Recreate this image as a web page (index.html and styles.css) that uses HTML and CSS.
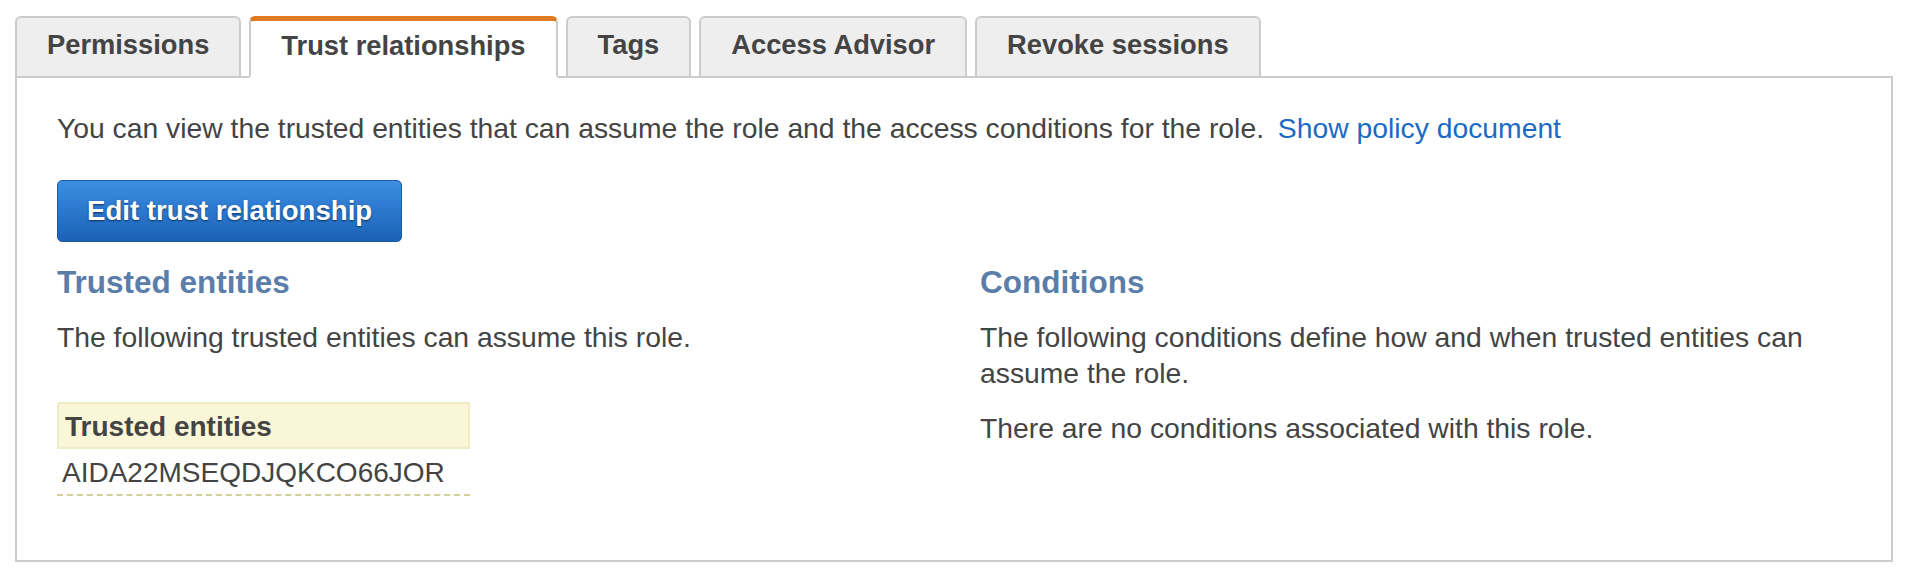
FILE: index.html
```html
<!DOCTYPE html>
<html lang="en">
<head>
<meta charset="utf-8">
<title>Trust relationships</title>
<link rel="stylesheet" href="styles.css">
</head>
<body>
<div class="page">
  <ul class="tabs">
    <li class="tab">Permissions</li>
    <li class="tab active">Trust relationships</li>
    <li class="tab">Tags</li>
    <li class="tab">Access Advisor</li>
    <li class="tab">Revoke sessions</li>
  </ul>
  <div class="panel">
    <p class="intro">You can view the trusted entities that can assume the role and the access conditions for the role. <a class="link" href="#">Show policy document</a></p>
    <div class="actions">
      <button class="btn" type="button">Edit trust relationship</button>
    </div>
    <div class="cols">
      <section class="col">
        <h3 class="heading">Trusted entities</h3>
        <p class="text">The following trusted entities can assume this role.</p>
        <table class="entities">
          <thead>
            <tr><th>Trusted entities</th></tr>
          </thead>
          <tbody>
            <tr><td>AIDA22MSEQDJQKCO66JOR</td></tr>
          </tbody>
        </table>
      </section>
      <section class="col">
        <h3 class="heading">Conditions</h3>
        <p class="text">The following conditions define how and when trusted entities can assume the role.</p>
        <p class="text">There are no conditions associated with this role.</p>
      </section>
    </div>
  </div>
</div>
</body>
</html>
```

FILE: styles.css
```css
* {
  box-sizing: border-box;
}

html, body {
  margin: 0;
  padding: 0;
  background: #ffffff;
}

body {
  font-family: "Liberation Sans", Arial, Helvetica, sans-serif;
  color: #444444;
}

.page {
  padding: 16px 17px 0 15px;
}

.tabs {
  list-style: none;
  margin: 0 0 -2px 0;
  padding: 0;
  display: flex;
  gap: 8px;
}

.tab {
  position: relative;
  z-index: 1;
  height: 62px;
  padding: 0 30px 4px;
  border: 2px solid #cccccc;
  border-radius: 6px 6px 0 0;
  background: #eeeeee;
  font-size: 27.3px;
  font-weight: bold;
  line-height: 54px;
  color: #444444;
  white-space: nowrap;
}

.tab.active {
  background: #ffffff;
  border-top: 5px solid #e17b23;
  border-bottom-color: #ffffff;
  line-height: 49px;
  padding-bottom: 6px;
}

.panel {
  height: 486px;
  border: 2px solid #cccccc;
  padding: 30px 40px 0 40px;
}

.intro {
  margin: 0;
  font-size: 28.3px;
  line-height: 40px;
}

.link {
  margin-left: 6px;
  color: #1b6ac3;
  text-decoration: none;
}

.actions {
  margin-top: 32px;
}

.btn {
  height: 62px;
  padding: 0 29px;
  border: 1px solid #1a5ba6;
  border-radius: 5px;
  background: linear-gradient(to bottom, #3c8fe1 0%, #2b78cf 50%, #1c62b4 100%);
  color: #ffffff;
  font-family: "Liberation Sans", Arial, Helvetica, sans-serif;
  font-size: 27.6px;
  font-weight: bold;
  text-shadow: 0 1px 2px rgba(0, 0, 0, 0.6);
  cursor: pointer;
}

.cols {
  margin-top: 20px;
  display: grid;
  grid-template-columns: 1fr 1fr;
  column-gap: 52px;
}

.heading {
  margin: 0 0 17px;
  font-size: 31.5px;
  font-weight: bold;
  line-height: 40px;
  color: #5a7ea9;
}

.text {
  margin: 0 0 19px;
  font-size: 28.3px;
  line-height: 36px;
}

.entities {
  margin-top: 47px;
  width: 413px;
  border-collapse: separate;
  border-spacing: 0;
}

.entities th {
  padding: 7px 6px 4px;
  background: #faf7d9;
  border: 2px solid #efecc6;
  text-align: left;
  font-size: 28px;
  font-weight: bold;
  line-height: 32px;
  color: #444444;
}

.entities td {
  padding: 6px 5px 3px;
  font-size: 28px;
  line-height: 36px;
  border-bottom: 2px dashed #d3d09b;
  color: #444444;
}
```
